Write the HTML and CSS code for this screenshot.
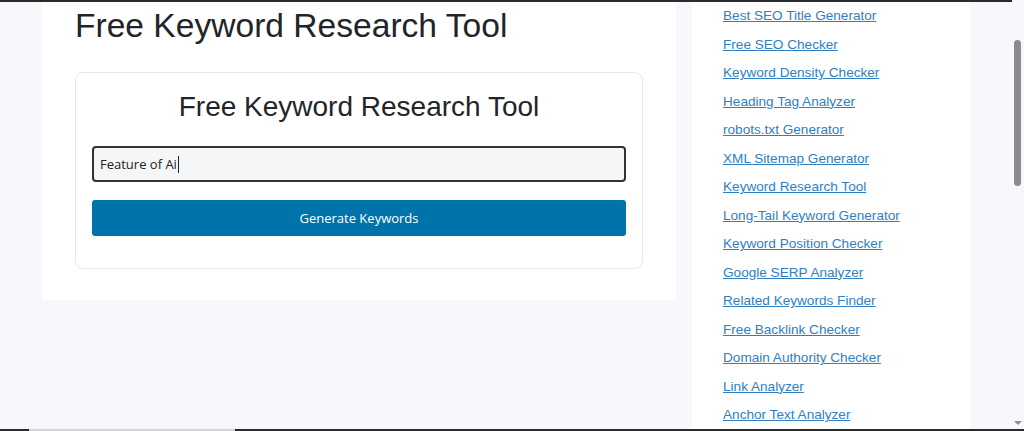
FILE: index.html
```html
<!DOCTYPE html>
<html>

<head>
  <title>Free Keyword Research Tool</title>
  <link rel="stylesheet" href="styles.css">
</head>

<body>
  <div class="topline"></div>
  <div class="page">
    <div class="main">
      <h1 class="page-title">Free Keyword Research Tool</h1>

      <div class="tool-card">
        <h2>Free Keyword Research Tool</h2>
        <div class="field">
          <span class="field-text">Feature of Ai</span><span class="caret"></span>
        </div>
        <button class="generate">Generate Keywords</button>
      </div>
    </div>

    <div class="sidebar">
      <ul class="tool-links">
        <li><a href="#">Best SEO Title Generator</a></li>
        <li><a href="#">Free SEO Checker</a></li>
        <li><a href="#">Keyword Density Checker</a></li>
        <li><a href="#">Heading Tag Analyzer</a></li>
        <li><a href="#">robots.txt Generator</a></li>
        <li><a href="#">XML Sitemap Generator</a></li>
        <li><a href="#">Keyword Research Tool</a></li>
        <li><a href="#">Long-Tail Keyword Generator</a></li>
        <li><a href="#">Keyword Position Checker</a></li>
        <li><a href="#">Google SERP Analyzer</a></li>
        <li><a href="#">Related Keywords Finder</a></li>
        <li><a href="#">Free Backlink Checker</a></li>
        <li><a href="#">Domain Authority Checker</a></li>
        <li><a href="#">Link Analyzer</a></li>
        <li><a href="#">Anchor Text Analyzer</a></li>
      </ul>
    </div>

    <div class="scrollbar">
      <div class="thumb"></div>
      <div class="arrow-down"></div>
    </div>
  </div>
  <div class="bottomline">
    <div class="bottom-light"></div>
  </div>
</body>

</html>
```

FILE: styles.css
```css
html,
body {
  margin: 0;
  height: 100%;
  overflow: hidden;
}

body {
  background-color: #f7f8fc;
  font-family: "Liberation Sans", Arial, sans-serif;
  color: #212529;
  display: flex;
  flex-direction: column;
}

/* thin dark edge at the very top */
.topline {
  height: 2px;
  width: 1012px;
  background-color: #2b2b2b;
}

.page {
  flex: 1;
  display: flex;
  align-items: flex-start;
  padding-left: 42px;
  min-height: 0;
}

/* Left white panel */
.main {
  width: 634px;
  background-color: #ffffff;
  padding: 0 33px 31px 33px;
  box-sizing: border-box;
}

.page-title {
  margin: 5px 0 27px 0;
  font-size: 33.6px;
  font-weight: normal;
  line-height: 38px;
}

/* Card with the form */
.tool-card {
  border: 1px solid #e8e8ec;
  border-radius: 8px;
  padding: 17px 16px 32px 16px;
}

.tool-card h2 {
  margin: 0 0 22px 0;
  text-align: center;
  font-size: 28px;
  font-weight: normal;
  line-height: 34px;
}

.field {
  height: 36px;
  border: 2px solid #333333;
  border-radius: 4px;
  background-color: #f5f6f7;
  box-sizing: border-box;
  display: flex;
  align-items: center;
  padding-left: 6px;
  font-family: "Open Sans", "Noto Sans", sans-serif;
  font-size: 13px;
  color: #222;
}

.caret {
  width: 1px;
  height: 17px;
  background-color: #222;
  margin-left: 1px;
}

.generate {
  display: block;
  width: 100%;
  height: 36px;
  margin-top: 18px;
  border: none;
  border-radius: 3px;
  background-color: #0073aa;
  color: #ffffff;
  font-family: "Open Sans", "Noto Sans", sans-serif;
  font-size: 13px;
}

/* Right sidebar with links */
.sidebar {
  width: 278px;
  margin-left: 16px;
  align-self: stretch;
  background-color: #ffffff;
}

.tool-links {
  list-style: none;
  margin: 0;
  padding: 3px 0 0 31px;
}

.tool-links li {
  height: 28.5px;
  line-height: 20px;
}

.tool-links a {
  color: #2f7fc3;
  font-size: 13.6px;
}

/* fake browser scrollbar */
.scrollbar {
  margin-left: auto;
  width: 12px;
  align-self: stretch;
  position: relative;
}

.thumb {
  position: absolute;
  left: 2px;
  top: 38px;
  width: 7px;
  height: 146px;
  border-radius: 4px;
  background-color: #8c8c8c;
}

.arrow-down {
  position: absolute;
  left: 2px;
  bottom: 4px;
  width: 0;
  height: 0;
  border-left: 4px solid transparent;
  border-right: 4px solid transparent;
  border-top: 4px solid #8c8c8c;
}

.bottomline {
  height: 2px;
  background-color: #2b2b2b;
  position: relative;
}

.bottom-light {
  position: absolute;
  left: 29px;
  top: 0;
  width: 206px;
  height: 2px;
  background-color: #d4d4d4;
}
```
